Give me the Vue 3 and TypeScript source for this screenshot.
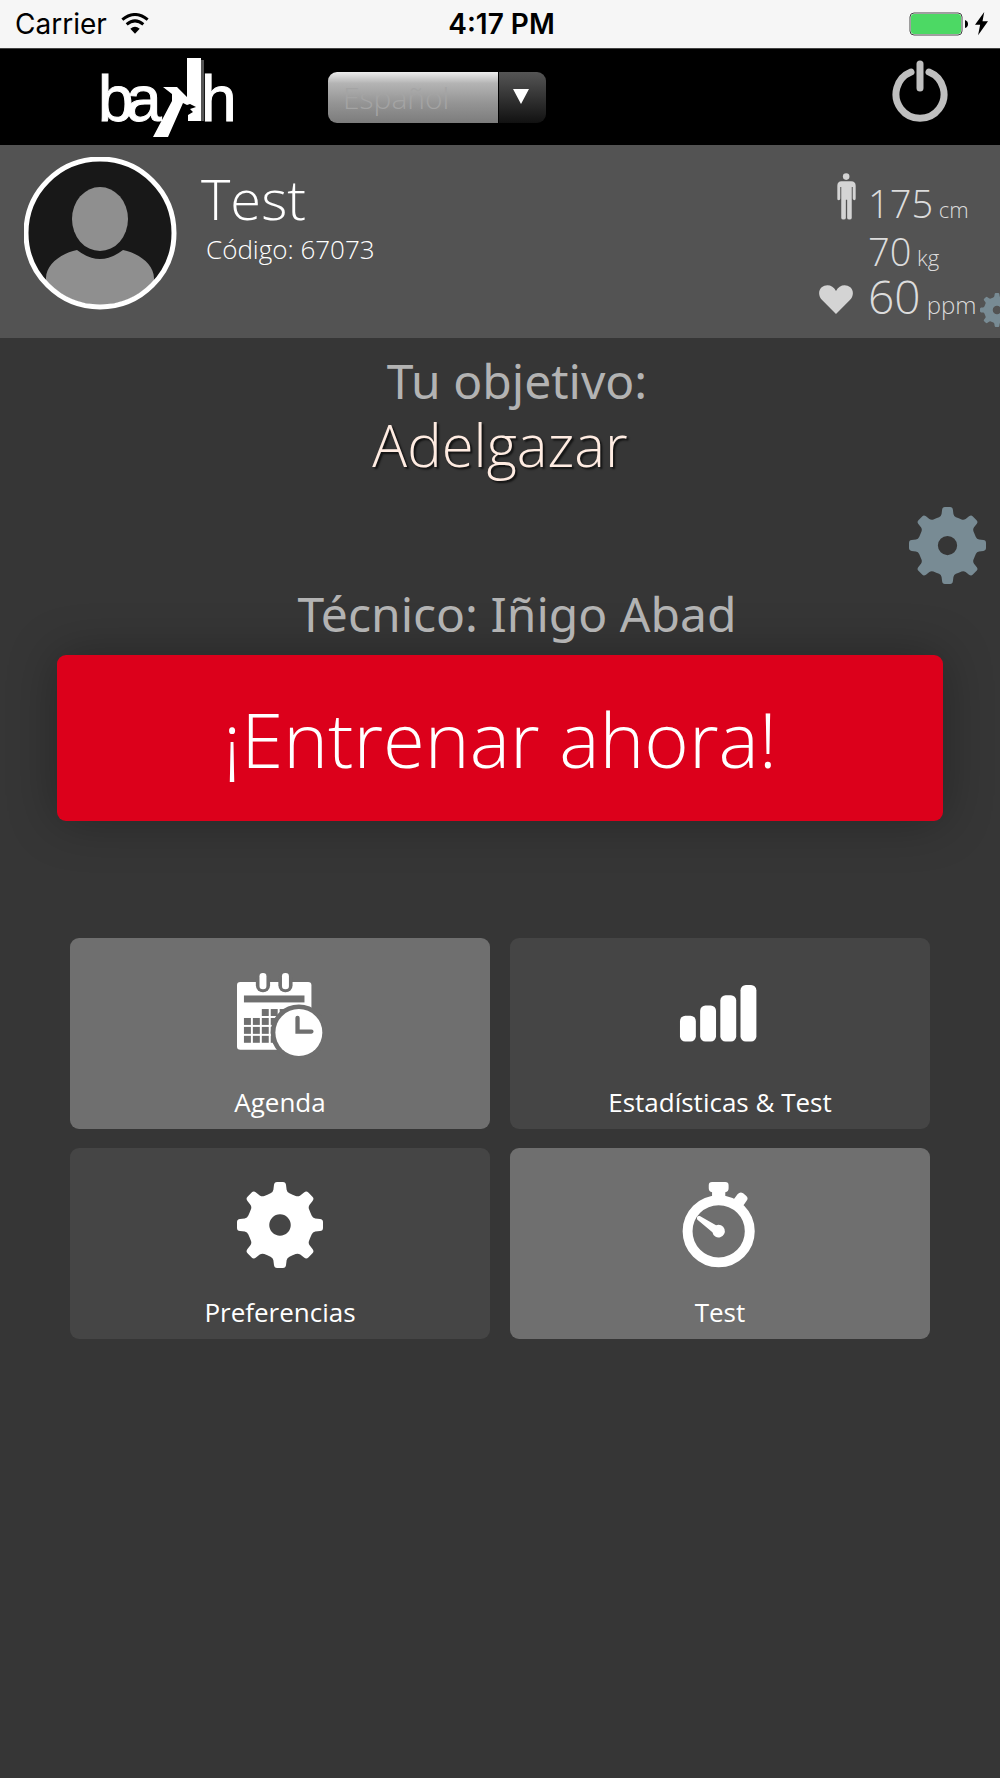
<script setup lang="ts">
import { ref } from 'vue'

interface Tile {
  id: 'agenda' | 'stats' | 'prefs' | 'test'
  label: string
  light: boolean
}

const language = ref('es')

const tiles: Tile[] = [
  { id: 'agenda', label: 'Agenda', light: true },
  { id: 'stats', label: 'Estadísticas & Test', light: false },
  { id: 'prefs', label: 'Preferencias', light: false },
  { id: 'test', label: 'Test', light: true },
]

// One tooth of the gear, pointing up from the origin; rotated eight times to close the outline.
function gearOutline(): string {
  const parts: string[] = []
  for (let i = 0; i < 8; i++) {
    const a = (i * Math.PI) / 4
    const p = (x: number, y: number) =>
      `${(x * Math.cos(a) - y * Math.sin(a)).toFixed(2)} ${(x * Math.sin(a) + y * Math.cos(a)).toFixed(2)}`
    parts.push(
      `${i === 0 ? 'M' : 'L'}${p(-14.6, -35.3)}L${p(-11, -36.8)}Q${p(-8.2, -38)} ${p(-7.7, -41)}L${p(-7, -46.5)}` +
        `Q${p(-6.6, -50)} ${p(-3.4, -50)}L${p(3.4, -50)}Q${p(6.6, -50)} ${p(7, -46.5)}L${p(7.7, -41)}` +
        `Q${p(8.2, -38)} ${p(11, -36.8)}`,
    )
  }
  return parts.join('') + 'ZM12.5 0A12.5 12.5 0 1 0 -12.5 0A12.5 12.5 0 1 0 12.5 0Z'
}
const gear = gearOutline()

const calendarDays: [number, number][] = [
  [606, 269], [633, 269], [660, 269],
  [552, 296], [579, 296], [606, 296], [633, 296],
  [552, 323], [579, 323], [606, 323], [633, 323],
  [552, 350], [579, 350], [606, 350], [633, 350],
]
</script>

<template>
  <div class="screen">
    <div class="status">
      <div class="carrier">
        <span>Carrier</span>
        <svg class="wifi" viewBox="0 0 84 64" aria-hidden="true">
          <g fill="none" stroke="#000" stroke-width="9">
            <path d="M4 20Q42 -11 80 20" />
            <path d="M17 34Q42 13 67 34" />
          </g>
          <path d="M28 47Q42 36 56 47L42 62Z" fill="#000" />
        </svg>
      </div>
      <span class="clock">4:17 PM</span>
      <div class="battery">
        <svg class="cell" viewBox="0 0 60 24" aria-hidden="true">
          <rect x="1" y="1" width="52" height="22" rx="4" fill="#fff" stroke="#444" />
          <rect x="2" y="2" width="50" height="20" rx="3" fill="#4cd964" />
          <path d="M56 8Q59 9 59 12T56 16Z" fill="#000" />
        </svg>
        <svg class="bolt" viewBox="0 0 38 68" aria-hidden="true">
          <path d="M27 0L0 37H15L9 68L38 27H22Z" fill="#000" />
        </svg>
      </div>
    </div>

    <header class="topbar">
      <svg class="logo" viewBox="96 54 144 86" role="img" aria-label="bakh">
        <g fill="#fff" stroke="#fff" font-family="'Liberation Sans', Arial, sans-serif" font-size="64">
          <text x="98 126" y="121">ba</text>
          <text x="201" y="121">h</text>
        </g>
        <path d="M201 60H204V121H201Z" fill="#555" />
        <path d="M187 58H201V121H188V115L193 112L190 109L196 107L190 104L187 105L183 103L168 137H153L172 101L172 94L163 87H177L187 97Z" fill="#fff" />
      </svg>
      <div class="language">
        <select v-model="language" aria-label="Idioma">
          <option value="es">Español</option>
        </select>
        <span class="arrow" aria-hidden="true"></span>
      </div>
      <button class="power" type="button" aria-label="Cerrar sesión">
        <svg viewBox="0 0 56 62" aria-hidden="true">
          <g fill="none" stroke="#bfbfbf" stroke-width="7" stroke-linecap="round">
            <path d="M19 12A24 24 0 1 0 37 12" />
            <path d="M28 4V28" />
          </g>
        </svg>
      </button>
    </header>

    <section class="profile">
      <svg class="avatar" viewBox="0 0 153 153" aria-hidden="true">
        <defs>
          <clipPath id="face"><circle cx="76" cy="76" r="72" /></clipPath>
        </defs>
        <circle cx="76" cy="76" r="74" fill="#181818" />
        <g clip-path="url(#face)" fill="#8f8f8f">
          <ellipse cx="76" cy="62" rx="28" ry="32" />
          <path d="M22 121C22 107 38 96 53 93Q76 111 99 93C114 96 130 107 130 121V153H22Z" />
        </g>
        <circle cx="76" cy="76" r="74" fill="none" stroke="#fff" stroke-width="5" />
      </svg>
      <div class="who">
        <h1>Test</h1>
        <p>Código: 67073</p>
      </div>
      <div class="stats">
        <div class="stat height">
          <svg class="person" viewBox="173 68 58 142" aria-hidden="true">
            <g fill="#d4d4d4">
              <circle cx="201" cy="79" r="10" />
              <path d="M187 93H216Q230 93 230 107V146Q230 151 226 151T221 146V111H218V205Q218 210 211 210T204 205V150H200V205Q200 210 193 210T186 205V111H183V146Q183 151 178 151T174 146V107Q174 93 187 93Z" />
            </g>
          </svg>
          <span><b>175</b> cm</span>
        </div>
        <div class="stat">
          <span><b>70</b> kg</span>
        </div>
        <div class="stat pulse">
          <svg class="heart" viewBox="119 415 102 88" aria-hidden="true">
            <path d="M170 502L129 461C117 449 116 433 127 422C140 411 161 414 170 433C179 414 200 411 213 422C224 433 223 449 211 461Z" fill="#d4d4d4" />
          </svg>
          <span><b>60</b> ppm</span>
        </div>
      </div>
      <button class="mini" type="button" aria-label="Editar datos">
        <svg viewBox="-50 -50 100 100" aria-hidden="true"><path :d="gear" fill="#788b94" fill-rule="evenodd" /></svg>
      </button>
    </section>

    <main>
      <section class="goal">
        <p class="caption">Tu objetivo:</p>
        <h2>Adelgazar</h2>
        <button class="edit" type="button" aria-label="Cambiar objetivo">
          <svg viewBox="-50 -50 100 100" aria-hidden="true"><path :d="gear" fill="#788b94" fill-rule="evenodd" /></svg>
        </button>
        <p class="caption">Técnico: Iñigo Abad</p>
      </section>

      <button class="train" type="button">¡Entrenar ahora!</button>

      <nav class="tiles">
        <button v-for="tile in tiles" :key="tile.id" type="button" class="tile" :class="{ light: tile.light }">
          <svg v-if="tile.id === 'agenda'" viewBox="531 157 260 260" aria-hidden="true">
            <rect x="531" y="187" width="225" height="205" rx="10" fill="#fff" />
            <g class="cut">
              <rect x="588" y="157" width="43" height="61" rx="21" />
              <rect x="656" y="157" width="43" height="61" rx="21" />
              <rect x="552" y="228" width="183" height="21" />
              <rect v-for="[x, y] in calendarDays" :key="`${x}-${y}`" :x="x" :y="y" width="21" height="21" />
              <circle cx="718" cy="340" r="85" />
            </g>
            <rect x="599" y="160" width="21" height="49" rx="10" fill="#fff" />
            <rect x="667" y="160" width="21" height="49" rx="10" fill="#fff" />
            <circle cx="718" cy="340" r="71" fill="#fff" />
            <path class="hands" d="M714 296V337H756" />
          </svg>
          <svg v-else-if="tile.id === 'stats'" viewBox="531 157 260 260" aria-hidden="true">
            <g fill="#fff">
              <rect x="540" y="289" width="48" height="78" rx="16" />
              <rect x="601" y="258" width="48" height="109" rx="16" />
              <rect x="662" y="227" width="48" height="140" rx="16" />
              <rect x="723" y="196" width="48" height="171" rx="16" />
            </g>
          </svg>
          <svg v-else-if="tile.id === 'prefs'" viewBox="-50 -50 100 100" aria-hidden="true">
            <path :d="gear" fill="#fff" fill-rule="evenodd" />
          </svg>
          <svg v-else viewBox="531 157 260 260" aria-hidden="true">
            <circle cx="657" cy="306" r="94" fill="none" stroke="#fff" stroke-width="30" />
            <g fill="#fff">
              <path d="M637 157H677Q687 157 687 167V176Q687 186 677 188V202H637V188Q627 186 627 176V167Q627 157 637 157Z" />
              <path d="M705 206L714 194Q722 185 731 191L739 198Q748 205 742 213L732 227L720 232L698 214Z" />
              <path d="M600 260L649 288A19 19 0 1 1 638 309L592 270Q589 258 600 260Z" />
            </g>
          </svg>
          <span>{{ tile.label }}</span>
        </button>
      </nav>
    </main>
  </div>
</template>

<style>
body {
  margin: 0;
  background: #363636;
}
</style>

<style scoped>
.screen {
  min-height: 100vh;
  overflow: hidden;
  background: #363636;
  color: #fff;
  font-family: 'Open Sans', 'Noto Sans', sans-serif;
  font-weight: 300;
}
h1,
h2,
p {
  margin: 0;
  font-weight: inherit;
}
button {
  padding: 0;
  border: 0;
  background: none;
  color: inherit;
  font: inherit;
  cursor: pointer;
}
svg {
  display: block;
}

.status {
  display: grid;
  grid-template-columns: 1fr auto 1fr;
  align-items: center;
  height: 48px;
  padding: 0 12px 0 15px;
  border-bottom: 1px solid #444;
  background: #f6f6f6;
  color: #000;
  font-family: Inter, Roboto, sans-serif;
  font-size: 28px;
  font-weight: 400;
}
.carrier,
.battery {
  display: flex;
  align-items: center;
  gap: 14px;
}
.battery {
  justify-content: flex-end;
  gap: 6px;
}
.clock {
  font-weight: 600;
}
.wifi {
  width: 28px;
}
.cell {
  width: 60px;
}
.bolt {
  width: 13px;
}

.topbar {
  display: flex;
  align-items: flex-start;
  height: 96px;
  padding: 0 52px 0 96px;
  box-sizing: border-box;
  background: #000;
}
.logo {
  flex: none;
  width: 144px;
  margin-top: 5px;
  overflow: visible;
}
.language {
  display: flex;
  flex: none;
  width: 218px;
  height: 51px;
  margin: 23px auto 0 88px;
  overflow: hidden;
  border-radius: 9px;
}
.language select {
  flex: 1;
  min-width: 0;
  padding: 0 15px;
  appearance: none;
  border: 0;
  border-radius: 0;
  background: linear-gradient(#ededed, #b4b4b4 22%, #959595 60%, #7c7c7c);
  color: #a4a4a4;
  font: inherit;
  font-size: 30px;
}
.arrow {
  display: flex;
  align-items: center;
  justify-content: center;
  box-sizing: border-box;
  width: 47px;
  margin-left: 1px;
  padding: 0 4px 2px 0;
  background: linear-gradient(#555, #111);
}
.arrow::before {
  content: '';
  border: 8px solid transparent;
  border-top: 15px solid #fff;
  border-bottom: 0;
}
.power {
  width: 56px;
  margin-top: 11px;
}

.profile {
  position: relative;
  display: flex;
  align-items: flex-start;
  height: 193px;
  padding: 12px 24px;
  box-sizing: border-box;
  background: #535353;
}
.avatar {
  width: 153px;
}
.who {
  padding: 5px 0 0 24px;
}
.who h1 {
  font-size: 56px;
  line-height: 72px;
}
.who p {
  padding-left: 5px;
  font-size: 26px;
  line-height: 30px;
}
.stats {
  width: 157px;
  margin-left: auto;
  padding-top: 12px;
  color: #dcdcdc;
  font-size: 22px;
}
.stat {
  display: grid;
  grid-template-columns: 49px auto;
  align-items: center;
  height: 42px;
  line-height: 42px;
  white-space: nowrap;
}
.stat span {
  grid-column: 2;
}
.stat b {
  font-size: 38px;
  font-weight: 300;
}
.stat.height {
  align-items: end;
  height: 61px;
}
.stat.pulse {
  height: 56px;
  font-size: 24px;
}
.stat.pulse b {
  font-size: 46px;
}
.person {
  align-self: start;
  width: 19px;
  margin: 4px 0 0 18px;
}
.heart {
  width: 34px;
}
.mini {
  position: absolute;
  right: -14px;
  bottom: 11px;
  width: 34px;
}

.goal {
  display: flex;
  flex-direction: column;
  align-items: center;
  padding: 13px 14px 0;
}
.caption {
  padding-left: 34px;
  color: #b3b3b3;
  font-family: 'Noto Sans', 'Open Sans', sans-serif;
  font-size: 48px;
  font-weight: 400;
  line-height: 60px;
}
.goal h2 {
  color: #ffece2;
  font-size: 58px;
  line-height: 68px;
  text-shadow: 2px 2px 2px rgba(0, 0, 0, 0.7);
}
.edit {
  align-self: flex-end;
  width: 77px;
  margin: 28px 0 0;
}
.train {
  display: block;
  width: calc(100% - 114px);
  height: 166px;
  margin: 11px auto 0;
  border-radius: 9px;
  background: #dc001b;
  box-shadow: 0 0 50px rgba(0, 0, 0, 0.3);
  font-size: 76px;
}

.tiles {
  display: grid;
  grid-template-columns: 1fr 1fr;
  gap: 19px 20px;
  padding: 117px 70px 0;
}
.tile {
  --tile: #454545;
  display: flex;
  flex-direction: column;
  align-items: center;
  gap: 26px;
  height: 191px;
  padding-top: 34px;
  border-radius: 9px;
  background: var(--tile);
  font-size: 26px;
  font-weight: 400;
  line-height: 36px;
}
.tile.light {
  --tile: #6f6f6f;
}
.tile svg {
  width: 86px;
}
.cut {
  fill: var(--tile);
}
.hands {
  fill: none;
  stroke: var(--tile);
  stroke-width: 13;
  stroke-linecap: round;
}
</style>
